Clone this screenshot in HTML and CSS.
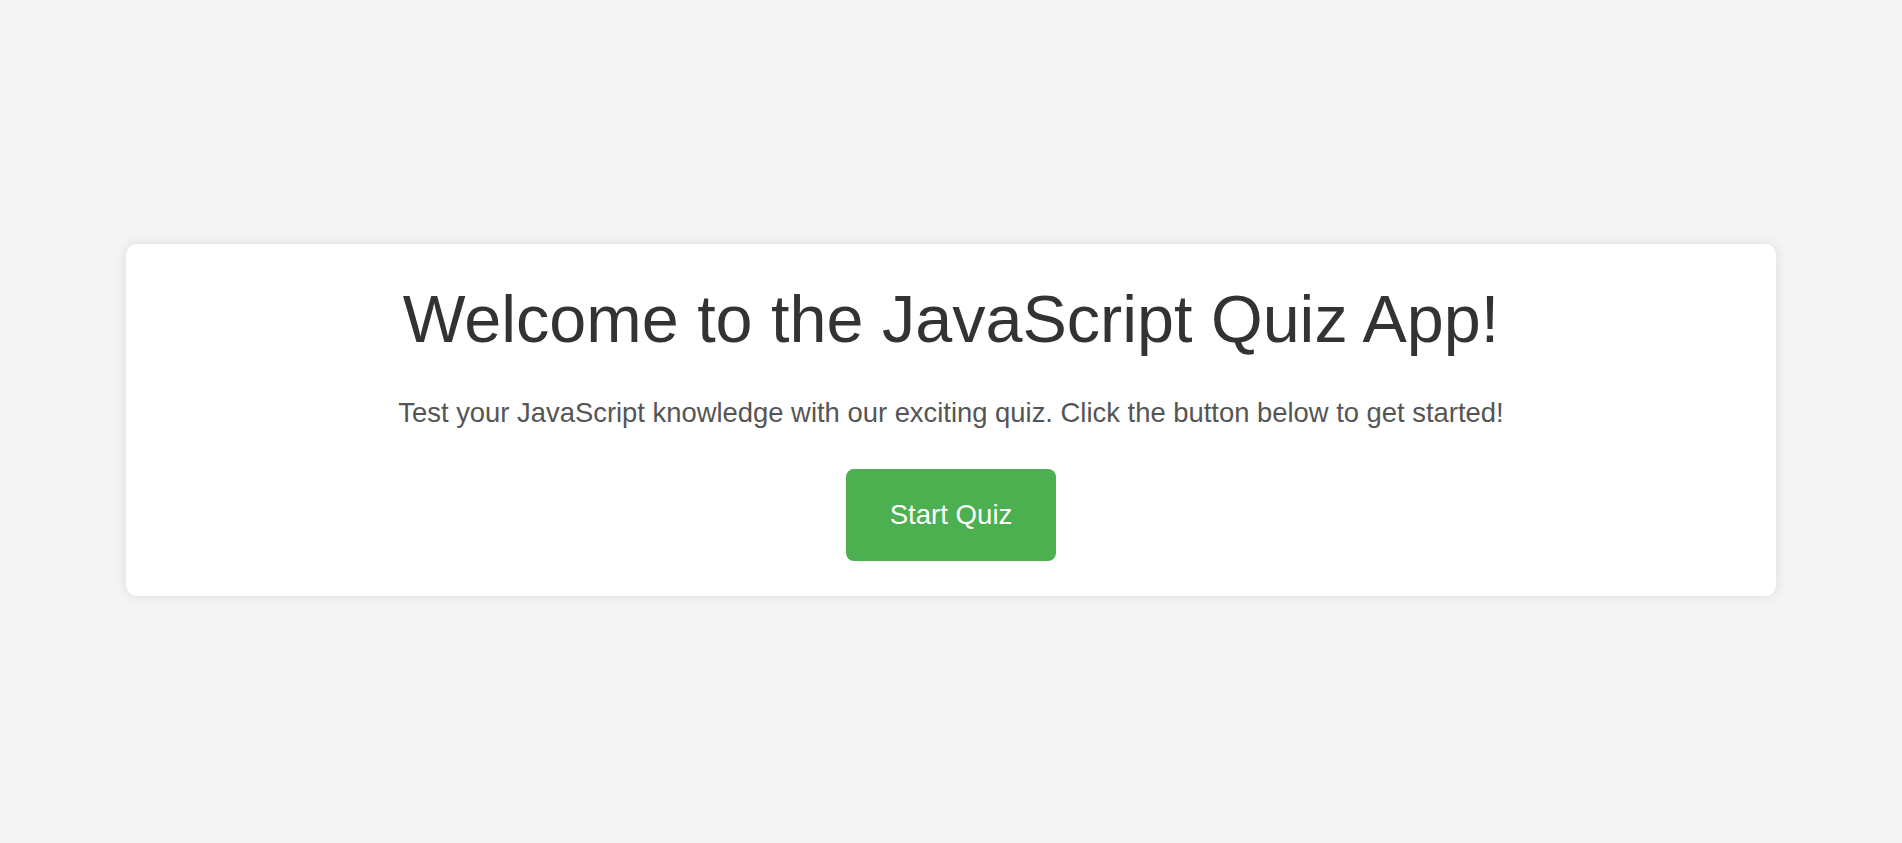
FILE: index.html
```html
<!DOCTYPE html>
<html lang="en">
<head>
<meta charset="UTF-8">
<title>JavaScript Quiz App</title>
<link rel="stylesheet" href="styles.css">
</head>
<body>
  <main class="page">
    <section class="card">
      <h1 class="title">Welcome to the JavaScript Quiz App!</h1>
      <p class="intro">Test your JavaScript knowledge with our exciting quiz. Click the button below to get started!</p>
      <button class="start-btn" type="button">Start Quiz</button>
    </section>
  </main>
</body>
</html>
```
FILE: styles.css
```css
html, body {
  margin: 0;
  padding: 0;
}

body {
  background: #f4f4f4;
  font-family: "Liberation Sans", Arial, sans-serif;
  color: #333;
}

.page {
  min-height: 839px;
  display: flex;
  align-items: center;
  justify-content: center;
}

.card {
  width: 1650px;
  box-sizing: border-box;
  background: #fff;
  border-radius: 11px;
  box-shadow: 0 0 12px rgba(0, 0, 0, 0.1);
  padding: 37px 0 35px;
  display: flex;
  flex-direction: column;
  align-items: center;
  text-align: center;
}

.title {
  margin: 0 0 40px;
  font-size: 66.5px;
  font-weight: normal;
  color: #333;
  line-height: normal;
}

.intro {
  margin: 0 0 40px;
  font-size: 27.4px;
  color: #555;
  line-height: normal;
}

.start-btn {
  font-family: "Liberation Sans", Arial, sans-serif;
  font-size: 27.6px;
  color: #fff;
  background: #4caf50;
  border: none;
  border-radius: 8px;
  padding: 30px 44px;
  line-height: normal;
  cursor: pointer;
}
```
